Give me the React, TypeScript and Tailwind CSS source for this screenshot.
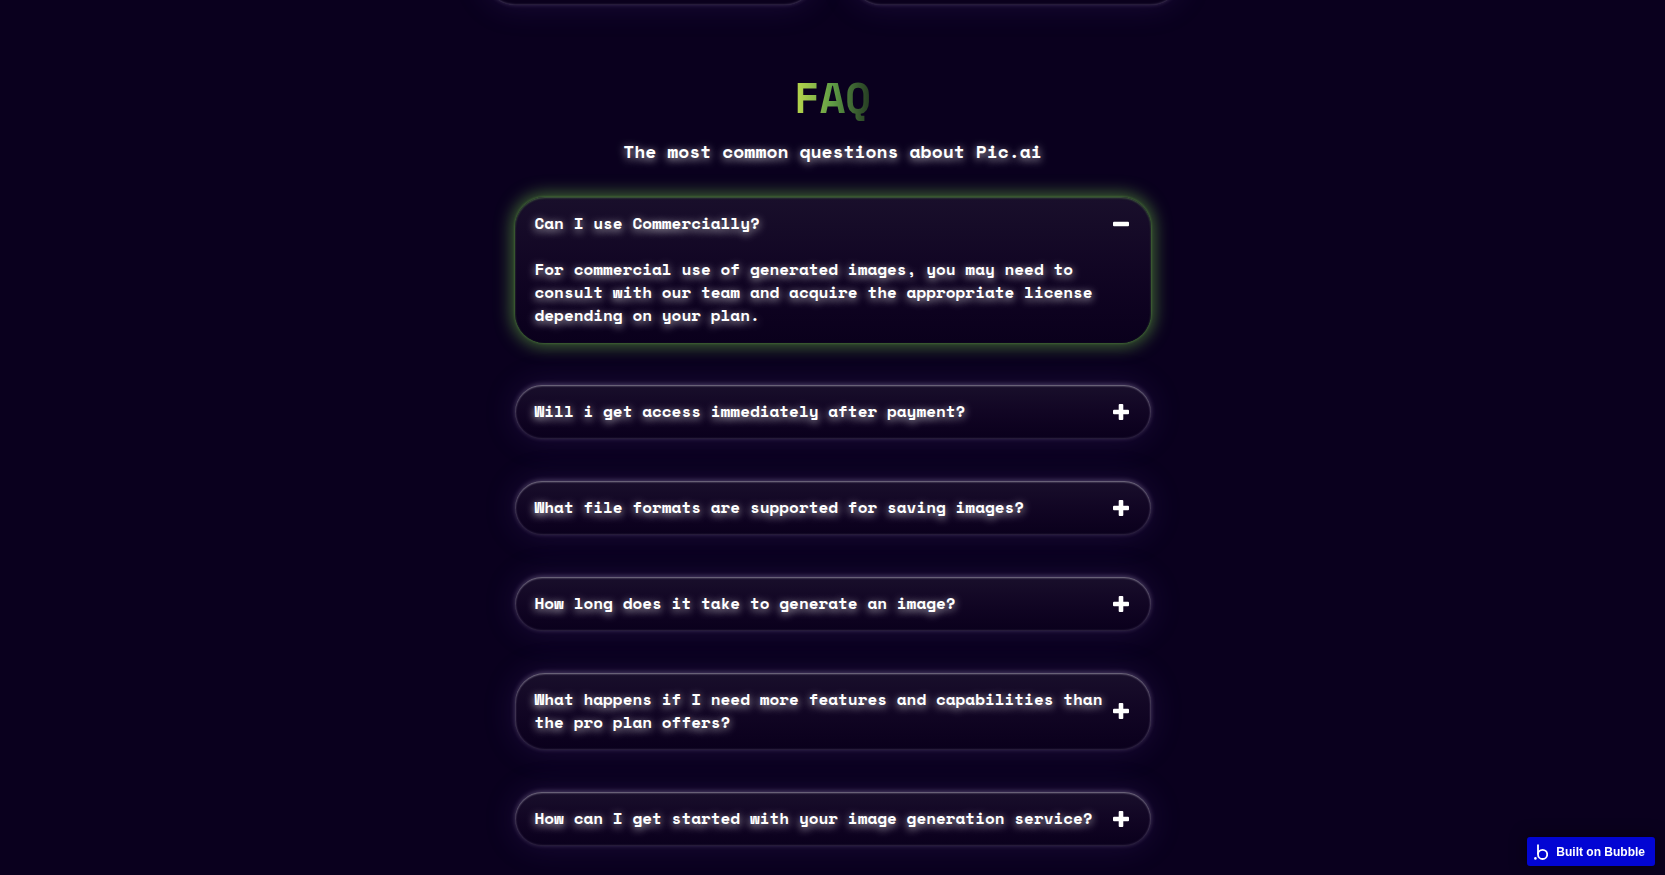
import React, { useState } from 'react';
import clsx from 'clsx';

const faqs = [
  {
    question: 'Can I use Commercially?',
    answer:
      'For commercial use of generated images, you may need to consult with our team and acquire the appropriate license depending on your plan.',
  },
  {
    question: 'Will i get access immediately after payment?',
    answer: 'Yes, your plan is activated as soon as the payment is confirmed.',
  },
  {
    question: 'What file formats are supported for saving images?',
    answer: 'Images can be saved as PNG, JPG and WebP.',
  },
  {
    question: 'How long does it take to generate an image?',
    answer: 'Most images are ready within a few seconds.',
  },
  {
    question: 'What happens if I need more features and capabilities than the pro plan offers?',
    answer: 'Contact our team and we will put together a custom plan for you.',
  },
  {
    question: 'How can I get started with your image generation service?',
    answer: 'Create an account, choose a plan and write your first prompt.',
  },
];

const cardGlow =
  'shadow-[inset_0_1px_2px_rgba(255,255,255,0.38),inset_0_0_2px_1px_rgba(220,200,255,0.16),0_-1px_5px_rgba(200,180,225,0.32),0_0_32px_rgba(80,55,150,0.22)]';
const activeGlow =
  'shadow-[inset_0_1px_2px_rgba(110,180,80,0.5),0_0_2px_1px_rgba(84,140,60,0.4),0_0_16px_4px_rgba(84,140,60,0.7)]';

function ToggleIcon({ open }: { open: boolean }) {
  return (
    <svg viewBox="0 0 16 16" className="size-4 shrink-0" fill="currentColor" aria-hidden="true">
      <rect x="0" y="5.7" width="16" height="4.6" rx="1" />
      {!open && <rect x="5.7" y="0" width="4.6" height="16" rx="1" />}
    </svg>
  );
}

function FaqItem({ question, answer, open, onToggle }: {
  question: string;
  answer: string;
  open: boolean;
  onToggle: () => void;
}) {
  return (
    <div
      className={clsx(
        'rounded-[30px] bg-linear-to-b from-[#190f2b] to-[#0a001c] pt-[15px] pr-[22px] pb-4 pl-5',
        open ? activeGlow : cardGlow
      )}
    >
      <button
        type="button"
        onClick={onToggle}
        aria-expanded={open}
        className="flex w-full cursor-pointer items-center justify-between gap-2 text-left [text-shadow:inherit]"
      >
        <span>{question}</span>
        <ToggleIcon open={open} />
      </button>
      {open && <p className="mt-[23px] pr-8">{answer}</p>}
    </div>
  );
}

function BubbleBadge() {
  return (
    <a
      href="#bubble"
      className="fixed right-[10px] bottom-[9px] flex h-[29px] items-center gap-2 rounded-[3px] bg-[#0205d3] pr-[10px] pl-[7px] font-['Liberation_Sans',Arial,sans-serif] text-xs font-bold text-white shadow-[0_0_16px_rgba(0,0,0,0.5)]"
    >
      <svg viewBox="0 0 14 16" className="h-4 w-[14px]" fill="none" aria-hidden="true">
        <circle cx="1.4" cy="14.4" r="1.3" fill="currentColor" />
        <path d="M4 0.5V10.2" stroke="currentColor" strokeWidth="1.8" />
        <circle cx="8.6" cy="10.4" r="4.6" stroke="currentColor" strokeWidth="1.8" />
      </svg>
      Built on Bubble
    </a>
  );
}

export default function App() {
  const [openIndex, setOpenIndex] = useState<number | null>(0);

  return (
    <main className="min-h-screen overflow-hidden bg-[#0a001e] font-['Space_Mono','DejaVu_Sans_Mono',monospace] text-white">
      {/* pricing cards, only the lower edge is in view */}
      <div className="mx-auto -mt-[59px] grid max-w-[696px] grid-cols-2 gap-9">
        <div className={clsx('h-16 rounded-[30px] bg-[#0a001c]', cardGlow)} />
        <div className={clsx('h-16 rounded-[30px] bg-[#0a001c]', cardGlow)} />
      </div>

      <section className="mx-auto flex max-w-[636px] flex-col pt-16 pb-7 font-bold">
        <h2 className="mx-auto bg-linear-to-r from-[#bcd94c] via-[#5f9c45] to-[#243a22] bg-clip-text text-[42px] leading-[56px] text-transparent">
          FAQ
        </h2>
        <p className="mt-3 text-center text-lg leading-[28px] [text-shadow:0_2px_8px_rgba(255,255,255,0.8)]">
          The most common questions about Pic.ai
        </p>
        <div className="mt-8 flex flex-col gap-[42px] text-base leading-[23px] [text-shadow:0_2px_8px_rgba(255,255,255,0.8)]">
          {faqs.map((faq, i) => (
            <FaqItem
              key={faq.question}
              question={faq.question}
              answer={faq.answer}
              open={openIndex === i}
              onToggle={() => setOpenIndex(openIndex === i ? null : i)}
            />
          ))}
        </div>
      </section>

      <BubbleBadge />
    </main>
  );
}
